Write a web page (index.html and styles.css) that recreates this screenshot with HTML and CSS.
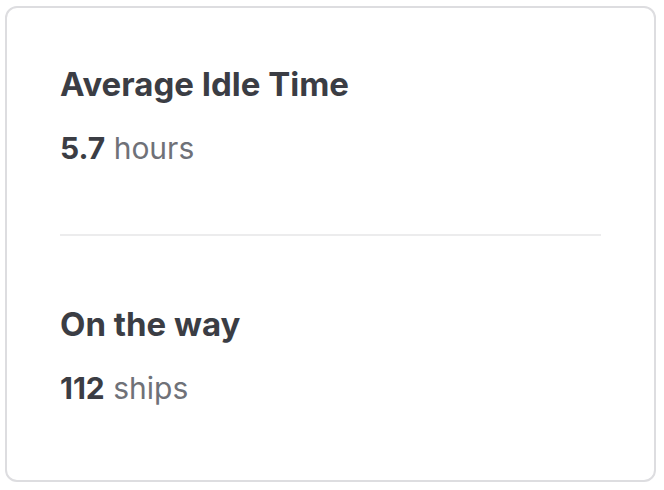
FILE: index.html
```html
<!DOCTYPE html>
<html>
<head>
<meta charset="utf-8">
<link rel="stylesheet" href="styles.css">
</head>
<body>
<div class="card">
  <section class="stat">
    <h2 class="stat-title">Average Idle Time</h2>
    <p class="stat-value"><span class="num">5.7</span> <span class="unit">hours</span></p>
  </section>
  <hr class="divider">
  <section class="stat">
    <h2 class="stat-title">On the way</h2>
    <p class="stat-value"><span class="num">112</span> <span class="unit">ships</span></p>
  </section>
</div>
</body>
</html>
```

FILE: styles.css
```css
html, body {
  margin: 0;
  padding: 0;
  background: #ffffff;
}
body {
  font-family: Inter, "Noto Sans", sans-serif;
  padding: 6px 8px 8px 5px;
}
.card {
  width: 651px;
  height: 476px;
  box-sizing: border-box;
  border: 2px solid #dddde0;
  border-radius: 12px;
  padding: 0 53px;
  display: flex;
  flex-direction: column;
}
.stat {
  padding: 56px 0 68px;
}
.divider + .stat {
  padding-top: 68px;
}
.stat-title {
  margin: 0;
  font-size: 33px;
  line-height: 40px;
  font-weight: 700;
  color: #3b3d44;
}
.stat-value {
  margin: 26px 0 0;
  font-size: 30px;
  line-height: 36px;
  color: #3b3d44;
}
.num {
  font-weight: 700;
}
.unit {
  color: #6f7178;
  font-weight: 400;
}
.divider {
  margin: 0;
  border: 0;
  border-top: 2px solid #ececed;
}
```
